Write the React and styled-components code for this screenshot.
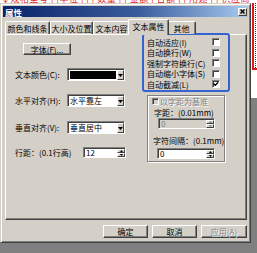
import React from 'react';
import styled, { createGlobalStyle } from 'styled-components';

const FONT = `"Noto Sans CJK SC", "DejaVu Sans", sans-serif`;

const Global = createGlobalStyle`
  html, body { margin: 0; padding: 0; }
  body { width: 257px; height: 253px; overflow: hidden; background: #808080; }
  * { box-sizing: border-box; }
`;

const Screen = styled.div`
  width: 257px;
  height: 253px;
  display: flex;
  flex-direction: column;
  background: #808080;
  font-family: ${FONT};
  font-size: 8px;
  color: #000;
  overflow: hidden;
`;

const DocStrip = styled.div`
  height: 3px;
  flex-shrink: 0;
  background: #fff;
  overflow: hidden;
`;

const DocText = styled.div`
  margin-top: -6px;
  color: #e01818;
  font-size: 9px;
  line-height: 9px;
  white-space: nowrap;
  padding-left: 1px;
  letter-spacing: 0.5px;
`;

const Stage = styled.div`
  display: flex;
  align-items: flex-start;
`;

const RightStrip = styled.div`
  width: 6px;
  height: 95px;
  background: #fff;
  display: flex;
  flex-direction: column;
`;

const RedMark = styled.div`
  margin-left: 1px;
  height: 67px;
  border-left: 2px solid #e01818;
  border-bottom: 2px solid #e01818;
  padding-left: 1px;
  display: flex;
`;

const DotLine = styled.div`
  width: 1px;
  border-left: 1px dotted #303030;
`;

const Dialog = styled.div`
  width: 251px;
  height: 240px;
  flex-shrink: 0;
  background: #d4d0c8;
  border: 1px solid;
  border-color: #d4d0c8 #404040 #404040 #d4d0c8;
  box-shadow: inset 1px 1px #fff, inset -1px -1px #808080;
  padding: 2px;
  display: flex;
  flex-direction: column;
`;

const TitleBar = styled.div`
  height: 11px;
  flex-shrink: 0;
  background: linear-gradient(to right, #0a246a 0%, #3a5c9c 55%, #a6caf0 100%);
  display: flex;
  align-items: center;
  justify-content: space-between;
  padding: 0 1px 0 2px;
`;

const TitleText = styled.span`
  color: #fff;
  font-weight: bold;
  font-size: 8.5px;
  line-height: 10px;
`;

const CloseButton = styled.div`
  width: 9px;
  height: 8px;
  background: #d4d0c8;
  border: 1px solid;
  border-color: #fff #404040 #404040 #fff;
  display: flex;
  align-items: center;
  justify-content: center;
`;

const TabStrip = styled.div`
  margin-top: 2px;
  height: 15px;
  flex-shrink: 0;
  display: flex;
  align-items: flex-end;
  padding-left: 2px;
`;

const Tab = styled.div`
  position: relative;
  width: ${p => p.$w}px;
  height: ${p => (p.$active ? 16 : 13)}px;
  margin: ${p => (p.$active ? '0 -2px -1px -2px' : '0')};
  z-index: ${p => (p.$active ? 2 : 1)};
  background: #d4d0c8;
  border-top: 1px solid #fff;
  border-left: 1px solid #fff;
  border-right: 1px solid #404040;
  border-radius: 2px 2px 0 0;
  box-shadow: inset -1px 0 #808080;
  display: flex;
  align-items: ${p => (p.$active ? 'flex-start' : 'center')};
  justify-content: center;
  padding-top: ${p => (p.$active ? '2px' : '0')};
  line-height: 9px;
  white-space: nowrap;
`;

const Panel = styled.div`
  margin: 0 1px 0 2px;
  height: 186px;
  flex-shrink: 0;
  border: 1px solid;
  border-color: #fff #404040 #404040 #fff;
  box-shadow: inset -1px -1px #808080;
  display: flex;
  align-items: flex-start;
`;

const LeftCol = styled.div`
  width: 136px;
  flex-shrink: 0;
  padding: 8px 0 0 9px;
  display: flex;
  flex-direction: column;
  align-items: flex-start;
`;

const RaisedButton = styled.div`
  width: ${p => p.$w}px;
  height: ${p => p.$h || 13}px;
  margin-left: ${p => p.$ml || 0}px;
  background: #d4d0c8;
  border: 1px solid;
  border-color: #fff #404040 #404040 #fff;
  box-shadow: inset -1px -1px #808080;
  display: flex;
  align-items: center;
  justify-content: center;
  line-height: 9px;
  white-space: nowrap;
  color: ${p => (p.$disabled ? '#808080' : '#000')};
  text-shadow: ${p => (p.$disabled ? '1px 1px #fff' : 'none')};
`;

const FieldRow = styled.div`
  margin-top: ${p => p.$top}px;
  height: 13px;
  display: grid;
  grid-template-columns: ${p => p.$label}px ${p => p.$field}px;
  align-items: center;
`;

const Label = styled.span`
  line-height: 9px;
  white-space: nowrap;
  color: ${p => (p.$disabled ? '#808080' : '#000')};
  text-shadow: ${p => (p.$disabled ? '1px 1px #fff' : 'none')};
`;

const Sunken = styled.div`
  width: ${p => p.$w}px;
  height: ${p => p.$h}px;
  margin-left: ${p => p.$ml || 0}px;
  background: ${p => (p.$disabled ? '#d4d0c8' : '#fff')};
  border: 1px solid;
  border-color: #808080 #fff #fff #808080;
  box-shadow: inset 1px 1px #404040;
  padding: 1px 0 0 1px;
  display: flex;
  align-items: stretch;
`;

const FieldText = styled.span`
  flex: 1;
  display: flex;
  align-items: center;
  padding-left: 1px;
  line-height: 8px;
  white-space: nowrap;
  color: ${p => (p.$disabled ? '#808080' : '#000')};
`;

const Swatch = styled.div`
  flex: 1;
  background: #000;
  margin: 1px;
`;

const DropButton = styled.div`
  width: 7px;
  background: #d4d0c8;
  border: 1px solid;
  border-color: #fff #404040 #404040 #fff;
  display: flex;
  align-items: center;
  justify-content: center;
`;

const SpinButtons = styled.div`
  width: 8px;
  display: flex;
  flex-direction: column;
`;

const SpinHalf = styled.div`
  flex: 1;
  background: #d4d0c8;
  border: 1px solid;
  border-color: #fff #404040 #404040 #fff;
  display: flex;
  align-items: center;
  justify-content: center;
`;

const RightCol = styled.div`
  width: 88px;
  margin-top: -2px;
  display: flex;
  flex-direction: column;
`;

const HighlightBox = styled.div`
  height: 59px;
  border: 2px solid #3663d2;
  border-radius: 3px;
  padding: 2px 8px 0 3px;
  display: flex;
  flex-direction: column;
`;

const CheckRow = styled.div`
  height: 10.5px;
  display: flex;
  align-items: center;
  justify-content: space-between;
`;

const CheckBox = styled.div`
  width: ${p => p.$s || 8}px;
  height: ${p => p.$s || 8}px;
  flex-shrink: 0;
  background: ${p => (p.$disabled ? '#d4d0c8' : '#fff')};
  border: 1px solid;
  border-color: #808080 #fff #fff #808080;
  box-shadow: inset 1px 1px #404040;
  display: flex;
  align-items: center;
  justify-content: center;
`;

const Group = styled.div`
  margin: 3px 0 0 5px;
  width: 78px;
  height: 67px;
  border: 1px solid #808080;
  box-shadow: inset 1px 1px #fff, 1px 1px #fff;
  display: flex;
  flex-direction: column;
  align-items: flex-start;
`;

const LegendRow = styled.div`
  margin: 1px 0 0 4px;
  height: 8px;
  display: flex;
  align-items: center;
  gap: 1px;
`;

const GroupLabel = styled(Label)`
  margin-top: ${p => p.$top}px;
  margin-left: ${p => p.$ml}px;
  line-height: 8px;
`;

const SpinWrap = styled.div`
  margin-top: ${p => p.$top}px;
`;

const ButtonRow = styled.div`
  margin-top: 5px;
  padding-right: 1px;
  display: flex;
  justify-content: flex-end;
  gap: 4px;
`;

const Arrow = () => (
  <svg width="5" height="3" viewBox="0 0 5 3">
    <polygon points="0,0 5,0 2.5,3" fill="#000" />
  </svg>
);

const SmallArrow = ({ up, color = '#000' }) => (
  <svg width="3" height="2" viewBox="0 0 3 2">
    <polygon points={up ? '0,2 3,2 1.5,0' : '0,0 3,0 1.5,2'} fill={color} />
  </svg>
);

const CloseIcon = () => (
  <svg width="5" height="5" viewBox="0 0 5 5">
    <path d="M0.5 0.5 L4.5 4.5 M4.5 0.5 L0.5 4.5" stroke="#000" strokeWidth="1.4" />
  </svg>
);

const CheckMark = () => (
  <svg width="6" height="6" viewBox="0 0 6 6">
    <path d="M0.8 2.8 L2.3 4.3 L5.2 1.2" stroke="#000" strokeWidth="1.3" fill="none" />
  </svg>
);

const Combo = ({ children }) => (
  <Sunken $w={58} $h={13}>
    {children}
    <DropButton>
      <Arrow />
    </DropButton>
  </Sunken>
);

const Spin = ({ value, w, ml, disabled }) => (
  <Sunken $w={w} $h={11} $ml={ml} $disabled={disabled}>
    <FieldText $disabled={disabled}>{value}</FieldText>
    <SpinButtons>
      <SpinHalf><SmallArrow up color={disabled ? '#808080' : '#000'} /></SpinHalf>
      <SpinHalf><SmallArrow color={disabled ? '#808080' : '#000'} /></SpinHalf>
    </SpinButtons>
  </Sunken>
);

const tabs = [
  { label: '颜色和线条', w: 45 },
  { label: '大小及位置', w: 43 },
  { label: '文本内容', w: 37 },
  { label: '文本属性', w: 41, active: true },
  { label: '其他', w: 29 },
];

const checks = [
  { label: '自动适应(I)', checked: false },
  { label: '自动换行(W)', checked: false },
  { label: '强制字符换行(C)', checked: false },
  { label: '自动缩小字体(S)', checked: false },
  { label: '自动截减(L)', checked: true },
];

export default function App() {
  return (
    <>
      <Global />
      <Screen>
        <DocStrip>
          <DocText>↓规格型号 ¦ ¦单位 ¦ ¦ ¦ 数量 ¦ ¦ 金额 ¦ 合额 ¦ ¦ 用途 ¦ ¦ 供应商</DocText>
        </DocStrip>
        <Stage>
          <Dialog>
            <TitleBar>
              <TitleText>属性</TitleText>
              <CloseButton><CloseIcon /></CloseButton>
            </TitleBar>
            <TabStrip>
              {tabs.map(t => (
                <Tab key={t.label} $w={t.w} $active={t.active}>{t.label}</Tab>
              ))}
            </TabStrip>
            <Panel>
              <LeftCol>
                <RaisedButton $w={48} $h={12} $ml={8}>字体(F)...</RaisedButton>
                <FieldRow $top={13} $label={52} $field={58}>
                  <Label>文本颜色(C):</Label>
                  <Combo><Swatch /></Combo>
                </FieldRow>
                <FieldRow $top={13} $label={52} $field={58}>
                  <Label>水平对齐(H):</Label>
                  <Combo><FieldText>水平靠左</FieldText></Combo>
                </FieldRow>
                <FieldRow $top={14} $label={52} $field={58}>
                  <Label>垂直对齐(V):</Label>
                  <Combo><FieldText>垂直居中</FieldText></Combo>
                </FieldRow>
                <FieldRow $top={12} $label={68} $field={43}>
                  <Label>行距：(0.1行高)</Label>
                  <Spin value="12" w={43} />
                </FieldRow>
              </LeftCol>
              <RightCol>
                <HighlightBox>
                  {checks.map(c => (
                    <CheckRow key={c.label}>
                      <Label>{c.label}</Label>
                      <CheckBox>{c.checked && <CheckMark />}</CheckBox>
                    </CheckRow>
                  ))}
                </HighlightBox>
                <Group>
                  <LegendRow>
                    <CheckBox $s={7} $disabled />
                    <Label $disabled>以字距为基准</Label>
                  </LegendRow>
                  <GroupLabel $top={3.5} $ml={6}>字距：(0.01mm)</GroupLabel>
                  <SpinWrap $top={1.5}>
                    <Spin value="0" w={57} ml={10} disabled />
                  </SpinWrap>
                  <GroupLabel $top={7.5} $ml={5}>字符间隔：(0.1mm)</GroupLabel>
                  <SpinWrap $top={3.5}>
                    <Spin value="0" w={58} ml={9} />
                  </SpinWrap>
                </Group>
              </RightCol>
            </Panel>
            <ButtonRow>
              <RaisedButton $w={45}>确定</RaisedButton>
              <RaisedButton $w={45}>取消</RaisedButton>
              <RaisedButton $w={46} $disabled>应用(A)</RaisedButton>
            </ButtonRow>
          </Dialog>
          <RightStrip>
            <RedMark><DotLine /></RedMark>
          </RightStrip>
        </Stage>
      </Screen>
    </>
  );
}
